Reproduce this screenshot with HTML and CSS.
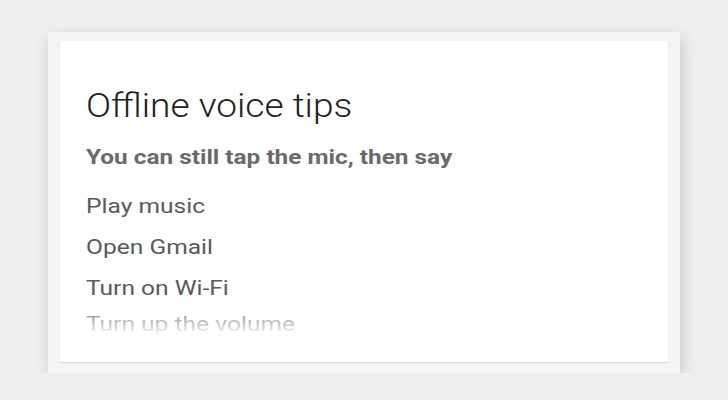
FILE: index.html
```html
<!DOCTYPE html>
<html lang="en">
<head>
  <meta charset="UTF-8">
  <title>Offline voice tips</title>
  <link rel="stylesheet" href="styles.css">
</head>
<body>
  <div class="frame">
    <div class="card">
      <h1>Offline voice tips</h1>
      <p class="lead">You can still tap the mic, then say</p>
      <ul class="tips">
        <li>Play music</li>
        <li>Open Gmail</li>
        <li>Turn on Wi-Fi</li>
        <li class="last">Turn up the volume</li>
      </ul>
    </div>
  </div>
</body>
</html>
```

FILE: styles.css
```css
body {
  margin: 0;
  background-color: #efefef;
  font-family: Roboto, "Liberation Sans", sans-serif;
}
.frame {
  margin: 32px 0 0 48px;
  width: 632px;
  height: 341px;
  box-sizing: border-box;
  padding: 9px 12px 11px 12px;
  background-color: #f5f5f5;
  box-shadow: 2px 5px 14px rgba(0, 0, 0, 0.17);
}
.card {
  position: relative;
  height: 100%;
  box-sizing: border-box;
  padding: 44px 26px 0 26px;
  background-color: #ffffff;
  border-radius: 2px;
  box-shadow: 0 1px 2px rgba(0, 0, 0, 0.16);
  overflow: hidden;
}
.card::after {
  content: "";
  position: absolute;
  left: 0;
  right: 0;
  bottom: 0;
  height: 56px;
  background: linear-gradient(rgba(255, 255, 255, 0.2), #ffffff 55%);
}
h1 {
  margin: 0;
  font-size: 34px;
  font-weight: 300;
  line-height: 40px;
  color: #212121;
  transform: scaleX(1.09);
  transform-origin: left;
}
.lead {
  margin: 18px 0 0 0;
  font-size: 21px;
  font-weight: 700;
  line-height: 28px;
  color: #6a6a6a;
  transform: scaleX(1.16);
  transform-origin: left;
}
.tips {
  list-style: none;
  margin: 15px 0 0 0;
  padding: 0;
}
.tips li {
  font-size: 21px;
  line-height: 41px;
  color: #5a5a5a;
  transform: scaleX(1.17);
  transform-origin: left;
}
.tips li.last {
  margin-top: -5px;
}
```
